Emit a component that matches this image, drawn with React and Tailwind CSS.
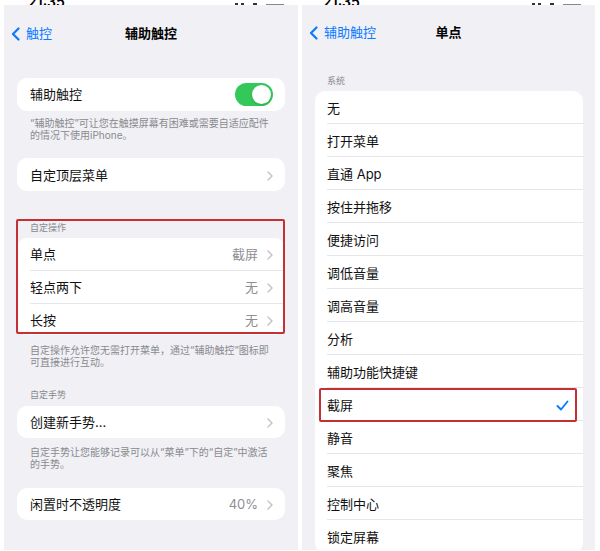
import React from 'react'

const font = "font-['Inter','Noto_Sans_CJK_SC',sans-serif]"

const Chevron = () => (
  <svg width="6" height="10" viewBox="0 0 6 10" fill="none">
    <path d="M1 1 L5 5 L1 9" stroke="#c4c4c8" strokeWidth="1.5" strokeLinecap="round" strokeLinejoin="round" />
  </svg>
)

const BackChevron = () => (
  <svg width="9" height="14" viewBox="0 0 9 14" fill="none">
    <path d="M7.5 1.5 L2 7 L7.5 12.5" stroke="#0a7aff" strokeWidth="2.2" strokeLinecap="round" strokeLinejoin="round" />
  </svg>
)

const Check = () => (
  <svg width="13" height="11" viewBox="0 0 13 11" fill="none">
    <path d="M1.5 6 L5 9.5 L11.5 1.5" stroke="#0a7aff" strokeWidth="1.9" strokeLinecap="round" strokeLinejoin="round" />
  </svg>
)

const Toggle = () => (
  <div className="w-[38px] h-[23px] rounded-full bg-[#34c759] p-[2px] flex justify-end">
    <div className="w-[19px] h-[19px] rounded-full bg-white shadow" />
  </div>
)

const Row = ({ label, value, chevron, toggle, check, sep, h = 'h-[33px]', pl = 'pl-[13px]', pt = 'pt-[2px]' }) => (
  <div className={`${pl} ${h} flex`}>
    <div className={`flex-1 flex items-center pr-[12px] ${pt} ${sep ? 'border-b border-[#e6e6ea]' : ''}`}>
      <span className="flex-1 text-[13px] text-[#111]">{label}</span>
      {value && <span className="text-[13px] text-[#8e8e93] mr-[9px]">{value}</span>}
      {chevron && <Chevron />}
      {toggle && <Toggle />}
      {check && <span className="mr-[2px]"><Check /></span>}
    </div>
  </div>
)

// only the bottom of the status bar survives the crop
const StatusStrip = ({ timeX }) => (
  <div className="h-[5px] bg-white overflow-hidden flex items-end">
    <span className={`${timeX} text-[14px] leading-[14px] font-semibold text-black mb-[-4px]`}>21:35</span>
    <div className="ml-auto mr-[14px] flex items-end gap-[3px]">
      <div className="w-[3px] h-[2px] bg-[#333]" />
      <div className="w-[3px] h-[2px] bg-[#333]" />
      <div className="w-[4px] h-[2px] bg-[#333] ml-[6px]" />
      <div className="w-[18px] h-[1px] bg-[#888] ml-[6px]" />
    </div>
  </div>
)

const Nav = ({ back, title }) => (
  <div className="mt-[18px] h-[22px] grid grid-cols-[1fr_auto_1fr] items-center">
    <div className="flex items-center gap-[6px] pl-[7px]">
      <BackChevron />
      <span className="text-[13px] text-[#0a7aff]">{back}</span>
    </div>
    <span className="text-[13px] font-semibold text-black">{title}</span>
    <div />
  </div>
)

const Footer = ({ children, mt }) => (
  <p className={`${mt} px-[26px] text-[10px] leading-[12px] text-[#8a8a8e]`}>{children}</p>
)

const Header = ({ children, mt }) => (
  <p className={`${mt} px-[26px] text-[9px] leading-[12px] text-[#8a8a8e]`}>{children}</p>
)

const systemItems = [
  '无', '打开菜单', '直通 App', '按住并拖移', '便捷访问', '调低音量', '调高音量',
  '分析', '辅助功能快捷键', '截屏', '静音', '聚焦', '控制中心', '锁定屏幕',
]

export default function App() {
  return (
    <div className={`w-[600px] h-[551px] bg-white flex pl-[4px] gap-[4px] ${font}`}>
      {/* left screen */}
      <div className="w-[294px] flex flex-col relative">
        <StatusStrip timeX="ml-[24px]" />
        <div className="h-[545px] bg-[#f0f0f5] flex flex-col overflow-hidden">
          <Nav back="触控" title="辅助触控" />

          <div className="mt-[33px] mx-[13px] bg-white rounded-[10px] overflow-hidden">
            <Row label="辅助触控" toggle pt="pt-0" />
          </div>
          <Footer mt="mt-[6px]">
            “辅助触控”可让您在触摸屏幕有困难或需要自适应配件<br />的情况下使用iPhone。
          </Footer>

          <div className="mt-[17px] mx-[13px] bg-white rounded-[10px] overflow-hidden">
            <Row label="自定顶层菜单" chevron />
          </div>

          <Header mt="mt-[31px]">自定操作</Header>
          <div className="mt-[4px] mx-[13px] bg-white rounded-[10px] overflow-hidden">
            <Row label="单点" value="截屏" chevron sep />
            <Row label="轻点两下" value="无" chevron sep />
            <Row label="长按" value="无" chevron h="h-[31px]" />
          </div>
          <Footer mt="mt-[9px]">
            自定操作允许您无需打开菜单，通过“辅助触控”图标即<br />可直接进行互动。
          </Footer>

          <Header mt="mt-[21px]">自定手势</Header>
          <div className="mt-[5px] mx-[13px] bg-white rounded-[10px] overflow-hidden">
            <Row label="创建新手势..." chevron h="h-[32px]" />
          </div>
          <Footer mt="mt-[8px]">
            自定手势让您能够记录可以从“菜单”下的“自定”中激活<br />的手势。
          </Footer>

          <div className="mt-[18px] mx-[13px] bg-white rounded-[10px] overflow-hidden">
            <Row label="闲置时不透明度" value="40%" chevron h="h-[32px]" />
          </div>
        </div>
        {/* annotation */}
        <div className="absolute left-[12px] top-[219px] w-[269px] h-[115px] border-2 border-[#c62f33] rounded-[2px]" />
      </div>

      {/* right screen */}
      <div className="w-[293px] flex flex-col relative">
        <StatusStrip timeX="ml-[21px]" />
        <div className="h-[545px] bg-[#f0f0f5] flex flex-col overflow-hidden">
          <Nav back="辅助触控" title="单点" />
          <p className="mt-[32px] px-[25px] text-[9px] leading-[12px] text-[#8a8a8e]">系统</p>
          <div className="mt-[4px] ml-[13px] mr-[12px] bg-white rounded-[10px] overflow-hidden shrink-0">
            {systemItems.map((item, i) => (
              <Row
                key={item}
                label={item}
                check={item === '截屏'}
                sep={i < systemItems.length - 1}
                pl="pl-[12px]"
                pt="pt-[4px]"
              />
            ))}
          </div>
        </div>
        <div className="absolute left-[17px] top-[388px] w-[258px] h-[34px] border-2 border-[#c62f33] rounded-[2px]" />
      </div>
    </div>
  )
}
